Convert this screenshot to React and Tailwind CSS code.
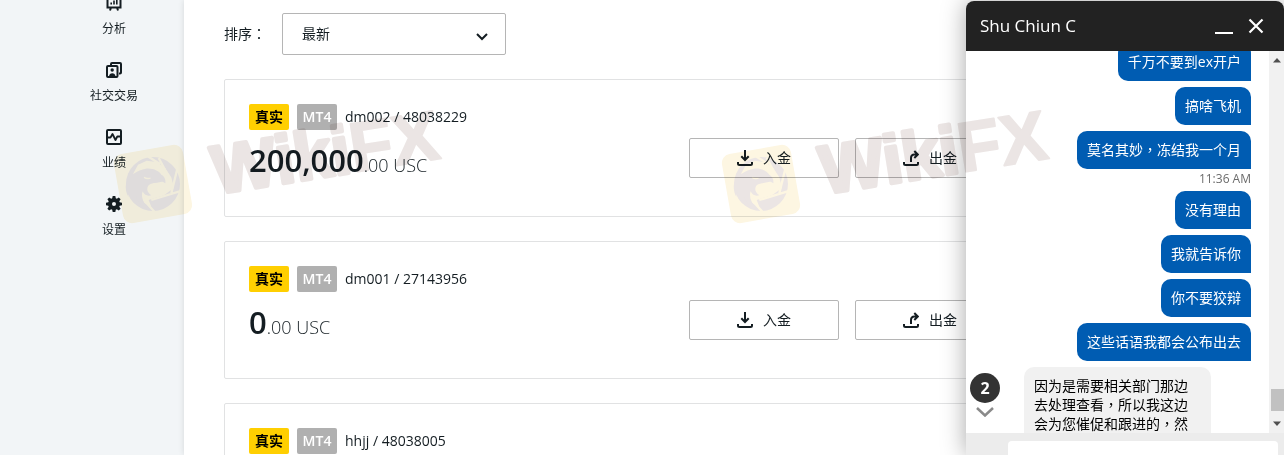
import React from "react";

const navItems = [
  { label: "分析", icon: AnalysisIcon },
  { label: "社交交易", icon: SocialIcon },
  { label: "业绩", icon: PerformanceIcon },
  { label: "设置", icon: GearIcon },
];

const accounts = [
  { name: "dm002 / 48038229", whole: "200,000", cents: ".00 USC" },
  { name: "dm001 / 27143956", whole: "0", cents: ".00 USC" },
  { name: "hhjj / 48038005", whole: "0", cents: ".00 USC" },
];

function AnalysisIcon() {
  return (
    <svg className="size-4" viewBox="0 0 16 16" fill="none" stroke="#141d22" strokeWidth="2">
      <path d="M0 2h16M1.500 2v10.500h13V2M5 12.500l-1 3M11 12.500l1 3" />
      <path d="M5.200 9.500V7.500M8 9.500V5.500M10.800 9.500V4.500" strokeWidth="1.600" />
    </svg>
  );
}

function SocialIcon() {
  return (
    <svg className="size-4" viewBox="0 0 16 16" fill="none" stroke="#141d22" strokeWidth="2">
      <path d="M5 3V2a1 1 0 0 1 1-1h8a1 1 0 0 1 1 1v8.500a1 1 0 0 1-1 1h-1" />
      <rect x="1" y="4" width="10.500" height="11" rx="1" />
      <circle cx="6.200" cy="8" r="1.700" fill="#141d22" stroke="none" />
      <path d="M3 14.500c0-4.500 6.500-4.500 6.500 0z" fill="#141d22" stroke="none" />
    </svg>
  );
}

function PerformanceIcon() {
  return (
    <svg className="size-4" viewBox="0 0 16 16" fill="none" stroke="#141d22" strokeWidth="2">
      <rect x="1" y="1" width="14" height="14" rx="1" />
      <path d="M2 8.500h2.500L6.500 5l3 6 1.800-3.500H14" strokeWidth="1.800" strokeLinejoin="round" />
    </svg>
  );
}

function GearIcon() {
  return (
    <svg className="size-4" viewBox="0 0 16 16" fill="#141d22">
      <path
        fillRule="evenodd"
        d="M6.700 0h2.600l.5 2.300 1 .4 2-1.300 1.800 1.800-1.300 2 .4 1 2.300.5v2.600l-2.300.5-.4 1 1.300 2-1.800 1.800-2-1.300-1 .4-.5 2.300H6.700l-.5-2.300-1-.4-2 1.300-1.800-1.800 1.300-2-.4-1L0 9.300V6.700l2.300-.5.4-1-1.300-2 1.800-1.800 2 1.300 1-.4zM8 6a2 2 0 1 0 0 4 2 2 0 0 0 0-4z"
      />
    </svg>
  );
}

function DepositIcon() {
  return (
    <svg className="size-4" viewBox="0 0 16 16" fill="none" stroke="#141d22" strokeWidth="2">
      <path d="M8 0v10M4.300 6.300L8 10l3.700-3.700" />
      <path d="M1 12v1.500A1.500 1.500 0 0 0 2.500 15h11a1.500 1.500 0 0 0 1.500-1.500V12" />
    </svg>
  );
}

function WithdrawIcon() {
  return (
    <svg className="size-4" viewBox="0 0 16 16" fill="none" stroke="#141d22" strokeWidth="2">
      <path d="M8 12V8c0-2.500 1-3.500 3.500-3.500h3M11.300 1l3.500 3.500L11.300 8" />
      <path d="M1 12v1.500A1.500 1.500 0 0 0 2.500 15h11a1.500 1.500 0 0 0 1.500-1.500V12" />
    </svg>
  );
}

/* Full-width punctuation sits in the middle of its cell. */
function Mark({ children }) {
  return <span className="font-['Noto_Sans_CJK_TC',sans-serif] leading-none">{children}</span>;
}

function AccountCard({ account }) {
  return (
    <article className="flex h-[138px] shrink-0 items-start rounded-xs border border-[#e1e2e3] p-6">
      <div className="w-[440px] shrink-0">
        <div className="flex items-center gap-2 text-sm leading-[26px]">
          <span className="w-10 rounded-xs bg-[#ffcf01] text-center font-bold text-black">真实</span>
          <span className="w-10 rounded-xs bg-[#b0b0b0] text-center font-semibold text-white">MT4</span>
          <span className="font-medium">{account.name}</span>
        </div>
        <p className="mt-2 leading-[44px]">
          <span className="text-[31px] font-semibold">{account.whole}</span>
          <span className="text-lg font-light">{account.cents}</span>
        </p>
      </div>
      <div className="mt-[34px] flex shrink-0 gap-4">
        <button className="flex h-10 w-[150px] items-center justify-center gap-2.5 rounded-xs border border-[#b5b5b5] text-sm">
          <DepositIcon />
          入金
        </button>
        <button className="flex h-10 w-[150px] items-center justify-center gap-2.5 rounded-xs border border-[#b5b5b5] text-sm">
          <WithdrawIcon />
          出金
        </button>
      </div>
    </article>
  );
}

function Sent({ children }) {
  return (
    <p className="rounded-l-[10px] rounded-tr-[10px] bg-[#005cb2] px-2.5 py-2 text-sm leading-[22px] text-white">
      {children}
    </p>
  );
}

function ChatPanel() {
  return (
    <aside className="absolute top-px right-0 bottom-0 flex w-[318px] flex-col rounded-t-lg bg-white shadow-[0_0_24px_rgba(0,0,0,0.35)]">
      <header className="flex h-[50px] shrink-0 items-center rounded-t-lg bg-[#222] pr-5 pl-3.5 text-white">
        <h2 className="flex-1 text-[17px]">Shu Chiun C</h2>
        <button aria-label="Minimize" className="mr-3.5">
          <svg className="h-4 w-5" viewBox="0 0 20 16" stroke="white" strokeWidth="2">
            <path d="M1 15h18" />
          </svg>
        </button>
        <button aria-label="Close">
          <svg className="size-4" viewBox="0 0 16 16" stroke="white" strokeWidth="2.200">
            <path d="M1.500 1.500l13 13M14.500 1.500l-13 13" />
          </svg>
        </button>
      </header>
      <div className="flex min-h-0 flex-1">
        <div className="flex min-w-0 flex-1 flex-col overflow-hidden pr-[18px]">
          <div className="-mt-2 flex shrink-0 flex-col items-end gap-1.5">
            <Sent>千万不要到ex开户</Sent>
            <Sent>搞啥飞机</Sent>
            <div className="flex flex-col items-end">
              <Sent>莫名其妙<Mark>，</Mark>冻结我一个月</Sent>
              <time className="-mb-1 text-xs leading-5 text-[#6b6b6b]">11:36 AM</time>
            </div>
            <Sent>没有理由</Sent>
            <Sent>我就告诉你</Sent>
            <Sent>你不要狡辩</Sent>
            <Sent>这些话语我都会公布出去</Sent>
          </div>
          <div className="mt-1.5 flex shrink-0 items-start pl-1">
            <button aria-label="2 new messages" className="mt-1.5 flex w-[30px] flex-col items-center gap-1">
              <span className="size-[30px] rounded-full bg-[#333] text-center text-base leading-[30px] font-bold text-white">2</span>
              <svg className="h-2.5 w-[18px]" viewBox="0 0 18 10" fill="none" stroke="#8a8a8a" strokeWidth="2.500">
                <path d="M1 1l8 7.500L17 1" />
              </svg>
            </button>
            <p className="ml-6 w-[187px] rounded-t-[10px] bg-[#f1f1f1] px-2.5 py-[9px] text-sm leading-[19px] text-black">
              因为是需要相关部门那边去处理查看<Mark>，</Mark>所以我这边会为您催促和跟进的<Mark>，</Mark>然
            </p>
          </div>
        </div>
        <div className="flex w-[15px] flex-col items-center justify-between bg-[#f1f1f1] py-1.5">
          <svg className="h-1.5 w-2" viewBox="0 0 8 6" fill="#505050">
            <path d="M0 5.500L4 1l4 4.500z" />
          </svg>
          <div className="mt-auto mb-2.5 h-[22px] w-[13px] self-end bg-[#c1c1c1]" />
          <svg className="h-1.5 w-2" viewBox="0 0 8 6" fill="#505050">
            <path d="M0 .5L4 5l4-4.500z" />
          </svg>
        </div>
      </div>
      <div className="flex h-[22px] shrink-0 overflow-hidden bg-[#ececec] pt-2 pr-1.5 pl-[42px]">
        <input aria-label="Message" className="h-10 min-w-0 flex-1 rounded-sm bg-white px-3 text-sm outline-none" />
      </div>
    </aside>
  );
}

function Watermark({ className }) {
  return (
    <svg
      aria-hidden="true"
      className={"pointer-events-none absolute top-[90px] h-[150px] w-[350px] mix-blend-multiply " + className}
      viewBox="0 0 350 150"
    >
      <rect x="8" y="59" width="70" height="70" rx="9" fill="#fdf6e2" transform="rotate(-10 43 94)" />
      <g transform="translate(4 48) scale(.3333)">
        <circle cx="117" cy="138" r="81" fill="#ebe5e4" />
        <path d="M58 106L72 80 98 68 128 72 152 88 172 118 180 150 150 172 104 186 112 206 92 196 70 170z" fill="#fdf6e2" />
        <path d="M94 50L138 78M134 60L164 116M192 84L172 166M204 158L112 186M122 222L84 180" stroke="#fdf6e2" strokeWidth="7" />
        <path
          d="M36 138C44 112 70 96 96 92C118 90 136 100 142 110C150 114 156 124 154 136C148 130 142 130 136 133C126 136 112 134 104 142C96 152 100 164 112 172C100 176 90 170 86 160C80 176 88 196 104 214C84 206 70 192 66 174C62 182 64 192 68 200C52 190 46 176 46 162C42 166 42 172 44 178C36 166 34 150 36 138Z"
          fill="#ebe5e4"
        />
        <path d="M90 118q10 6 20 2" stroke="#fdf6e2" strokeWidth="4" fill="none" />
      </g>
      <text
        transform="translate(106 104) rotate(-9)"
        fontFamily="'Liberation Sans', Arial, sans-serif"
        fontWeight="700"
        fontSize="68"
        fill="#ebe5e4"
        stroke="#ebe5e4"
        strokeLinejoin="round"
      >
        <tspan strokeWidth="4">Wiki</tspan>
        <tspan strokeWidth="2" fontSize="70">FX</tspan>
      </text>
    </svg>
  );
}

export default function App() {
  return (
    <div className="relative flex h-screen overflow-hidden bg-white font-['Open_Sans','Noto_Sans_CJK_SC',sans-serif] text-[#141d22]">
      <nav className="w-[184px] shrink-0 bg-[#f2f5f7] pl-11">
        <ul className="-mt-[5px] flex flex-col gap-[25px]">
          {navItems.map(({ label, icon: Icon }) => (
            <li key={label}>
              <a href="#" className="flex flex-col items-center gap-2.5 text-xs leading-4">
                <Icon />
                {label}
              </a>
            </li>
          ))}
        </ul>
      </nav>
      <main className="flex min-w-0 flex-1 flex-col gap-6 px-10 pt-[13px] shadow-[0_0_6px_rgba(0,0,0,0.12)]">
        <div className="flex shrink-0 items-center gap-4 text-sm">
          <label htmlFor="sort" className="w-[42px] whitespace-nowrap">排序<Mark>：</Mark></label>
          <div className="relative">
            <select
              id="sort"
              className="h-[42px] w-56 appearance-none rounded-xs border border-[#b5b5b5] bg-white px-[19px] text-sm"
            >
              <option>最新</option>
            </select>
            <svg
              className="pointer-events-none absolute top-5 right-[18px] h-2 w-3"
              viewBox="0 0 12 8"
              fill="none"
              stroke="#141d22"
              strokeWidth="2"
            >
              <path d="M1 1l5 5 5-5" />
            </svg>
          </div>
        </div>
        {accounts.map((account) => (
          <AccountCard key={account.name} account={account} />
        ))}
      </main>
      <ChatPanel />
      <Watermark className="left-[110px]" />
      <Watermark className="left-[718px]" />
    </div>
  );
}
